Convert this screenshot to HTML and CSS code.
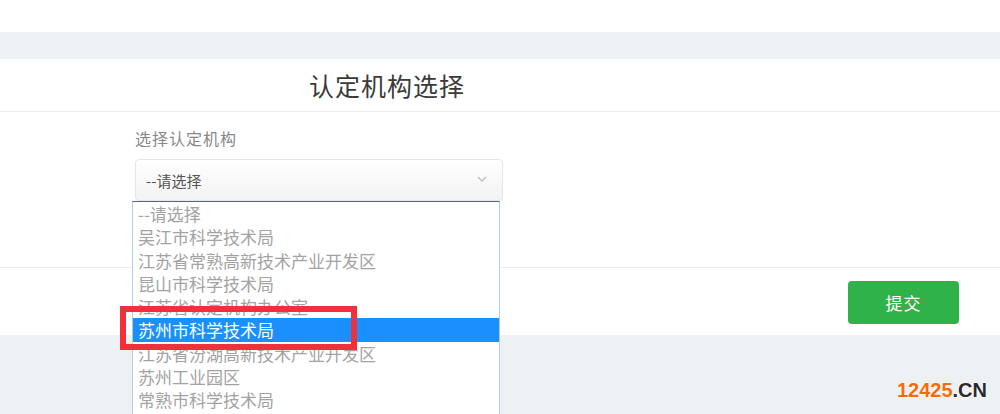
FILE: index.html
```html
<!DOCTYPE html>
<html lang="zh-CN">
<head>
  <meta charset="UTF-8">
  <title>认定机构选择</title>
  <link rel="stylesheet" href="styles.css">
</head>
<body>

  <div class="topbar"></div>

  <div class="card">
    <div class="card-head">
      <h2>认定机构选择</h2>
    </div>

    <div class="card-body">
      <label class="field-label">选择认定机构</label>
      <div class="field">
        <div class="select-box">
          <span>--请选择</span>
          <svg class="arrow" width="10" height="6" viewBox="0 0 10 6">
            <path d="M1 1 L5 5 L9 1" fill="none" stroke="#bfbfbf" stroke-width="1.4"/>
          </svg>
        </div>

        <ul class="dropdown">
          <li>--请选择</li>
          <li>吴江市科学技术局</li>
          <li>江苏省常熟高新技术产业开发区</li>
          <li>昆山市科学技术局</li>
          <li>江苏省认定机构办公室</li>
          <li class="selected">苏州市科学技术局</li>
          <li>江苏省汾湖高新技术产业开发区</li>
          <li>苏州工业园区</li>
          <li>常熟市科学技术局</li>
        </ul>
        <div class="mark"></div>
      </div>
    </div>

    <div class="card-foot">
      <button class="btn-submit">提交</button>
    </div>
  </div>

  <div class="watermark"><span class="num">12425</span><span class="cn">.CN</span></div>

</body>
</html>
```

FILE: styles.css
```css
body {
  margin: 0;
  background-color: #eef1f4;
  font-family: "Microsoft YaHei", "Noto Sans CJK SC", "Noto Sans", sans-serif;
  height: 414px;
  overflow: hidden;
  position: relative;
}

.topbar {
  height: 32px;
  background-color: #ffffff;
}

.card {
  margin-top: 27px;
  background-color: #ffffff;
}

.card-head {
  height: 52px;
  border-bottom: 1px solid #eeeeee;
  padding-left: 309px;
  display: flex;
  align-items: center;
}

.card-head h2 {
  margin: 0;
  font-size: 25px;
  font-weight: normal;
  color: #3a3a3a;
  letter-spacing: 1px;
}

.card-body {
  height: 155px;
  padding-left: 135px;
  box-sizing: border-box;
  padding-top: 16px;
}

.field-label {
  display: block;
  font-size: 16px;
  line-height: 20px;
  color: #888888;
  letter-spacing: 1px;
}

.field {
  position: relative;
  margin-top: 11px;
  width: 368px;
}

.select-box {
  height: 42px;
  box-sizing: border-box;
  border: 1px solid #e6e6e6;
  border-radius: 4px;
  background: linear-gradient(#ffffff, #f3f3f3);
  display: flex;
  align-items: center;
  justify-content: space-between;
  padding: 0 15px 0 10px;
  font-size: 15px;
  color: #555555;
}

.arrow {
  margin-top: -2px;
}

.dropdown {
  position: absolute;
  top: 42px;
  left: -3px;
  width: 368px;
  box-sizing: border-box;
  margin: 0;
  padding: 0 0 4px;
  list-style: none;
  background-color: #ffffff;
  border: 1px solid #b6cce8;
  border-top-color: #56667e;
  z-index: 2;
}

.dropdown li {
  height: 23.25px;
  line-height: 23.25px;
  padding-left: 5px;
  font-size: 17px;
  color: #a3a3a3;
  white-space: nowrap;
}

.dropdown li.selected {
  background-color: #1a90ff;
  color: #ffffff;
}

.mark {
  position: absolute;
  top: 147px;
  left: -15px;
  width: 237px;
  height: 44px;
  box-sizing: border-box;
  border: 6px solid #f0303a;
  z-index: 3;
}

.card-foot {
  height: 68px;
  border-top: 1px solid #eeeeee;
  box-sizing: border-box;
  padding-top: 13px;
  padding-left: 848px;
}

.btn-submit {
  width: 111px;
  height: 43px;
  border: none;
  border-radius: 4px;
  background-color: #30b24b;
  color: #ffffff;
  font-family: inherit;
  font-size: 17px;
  letter-spacing: 1px;
}

.watermark {
  position: absolute;
  right: 13px;
  bottom: 12px;
  font-family: "Liberation Sans", Arial, sans-serif;
  font-weight: bold;
  font-size: 20px;
  text-shadow: 0 0 2px #ffffff, 0 0 2px #ffffff;
}

.watermark .num {
  color: #ff6a00;
}

.watermark .cn {
  color: #2b2b2b;
}
```
